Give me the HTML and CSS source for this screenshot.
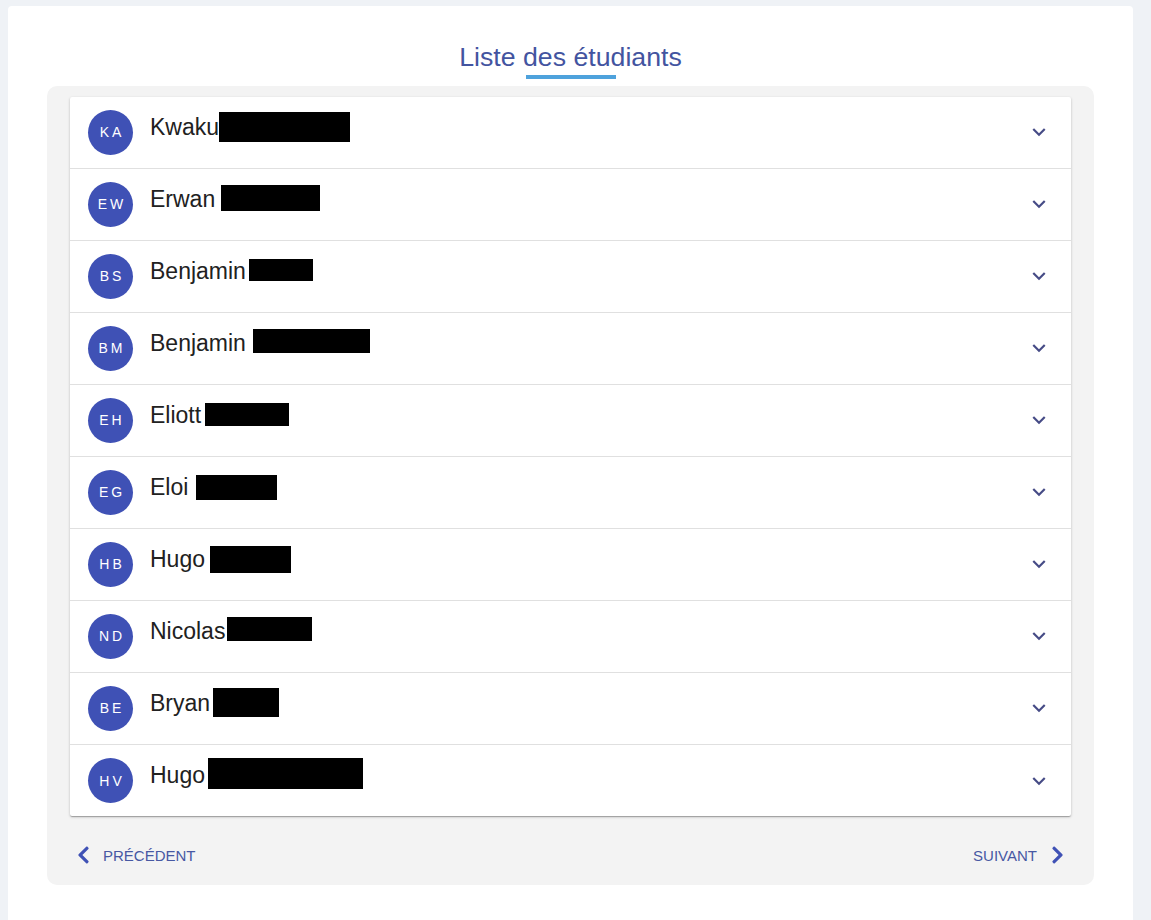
FILE: index.html
```html
<!DOCTYPE html>
<html lang="fr">
<head>
<meta charset="utf-8">
<title>Liste des étudiants</title>
<link rel="stylesheet" href="styles.css">
</head>
<body>
<main class="card">
  <h1 class="title">Liste des étudiants</h1>
  <div class="title-bar"></div>
  <section class="panel">
    <ul class="list">
      <li class="row"><span class="avatar">KA</span><div class="name"><span>Kwaku</span><span class="redact" style="margin-left:0;margin-top:0;width:131px;height:30px"></span></div><svg class="expand" viewBox="0 0 24 24"><path d="M16.59 8.59L12 13.17 7.41 8.59 6 10l6 6 6-6z"/></svg></li>
      <li class="row"><span class="avatar">EW</span><div class="name"><span>Erwan</span><span class="redact" style="margin-left:6px;margin-top:1px;width:99px;height:26px"></span></div><svg class="expand" viewBox="0 0 24 24"><path d="M16.59 8.59L12 13.17 7.41 8.59 6 10l6 6 6-6z"/></svg></li>
      <li class="row"><span class="avatar">BS</span><div class="name"><span>Benjamin</span><span class="redact" style="margin-left:3px;margin-top:3px;width:64px;height:22px"></span></div><svg class="expand" viewBox="0 0 24 24"><path d="M16.59 8.59L12 13.17 7.41 8.59 6 10l6 6 6-6z"/></svg></li>
      <li class="row"><span class="avatar">BM</span><div class="name"><span>Benjamin</span><span class="redact" style="margin-left:7px;margin-top:1px;width:117px;height:24px"></span></div><svg class="expand" viewBox="0 0 24 24"><path d="M16.59 8.59L12 13.17 7.41 8.59 6 10l6 6 6-6z"/></svg></li>
      <li class="row"><span class="avatar">EH</span><div class="name"><span>Eliott</span><span class="redact" style="margin-left:4px;margin-top:3px;width:84px;height:23px"></span></div><svg class="expand" viewBox="0 0 24 24"><path d="M16.59 8.59L12 13.17 7.41 8.59 6 10l6 6 6-6z"/></svg></li>
      <li class="row"><span class="avatar">EG</span><div class="name"><span>Eloi</span><span class="redact" style="margin-left:8px;margin-top:3px;width:81px;height:25px"></span></div><svg class="expand" viewBox="0 0 24 24"><path d="M16.59 8.59L12 13.17 7.41 8.59 6 10l6 6 6-6z"/></svg></li>
      <li class="row"><span class="avatar">HB</span><div class="name"><span>Hugo</span><span class="redact" style="margin-left:5px;margin-top:2px;width:81px;height:27px"></span></div><svg class="expand" viewBox="0 0 24 24"><path d="M16.59 8.59L12 13.17 7.41 8.59 6 10l6 6 6-6z"/></svg></li>
      <li class="row"><span class="avatar">ND</span><div class="name"><span>Nicolas</span><span class="redact" style="margin-left:2px;margin-top:1px;width:85px;height:24px"></span></div><svg class="expand" viewBox="0 0 24 24"><path d="M16.59 8.59L12 13.17 7.41 8.59 6 10l6 6 6-6z"/></svg></li>
      <li class="row"><span class="avatar">BE</span><div class="name"><span>Bryan</span><span class="redact" style="margin-left:3px;margin-top:0;width:66px;height:29px"></span></div><svg class="expand" viewBox="0 0 24 24"><path d="M16.59 8.59L12 13.17 7.41 8.59 6 10l6 6 6-6z"/></svg></li>
      <li class="row"><span class="avatar">HV</span><div class="name"><span>Hugo</span><span class="redact" style="margin-left:3px;margin-top:-2px;width:155px;height:31px"></span></div><svg class="expand" viewBox="0 0 24 24"><path d="M16.59 8.59L12 13.17 7.41 8.59 6 10l6 6 6-6z"/></svg></li>
    </ul>
    <nav class="pager">
      <button class="pager-btn prev" type="button">
        <svg class="chev" viewBox="0 0 320 512"><path d="M34.52 239.03L228.87 44.69c9.37-9.370 24.57-9.37 33.94 0l22.67 22.67c9.36 9.36 9.37 24.52.04 33.9L131.49 256l154.02 154.75c9.34 9.38 9.32 24.54-.04 33.9l-22.67 22.67c-9.37 9.37-24.57 9.37-33.94 0L34.52 272.97c-9.37-9.37-9.37-24.57 0-33.94z"/></svg>
        <span>PRÉCÉDENT</span>
      </button>
      <button class="pager-btn next" type="button">
        <span>SUIVANT</span>
        <svg class="chev" viewBox="0 0 320 512"><path d="M285.476 272.971L91.132 467.314c-9.373 9.373-24.569 9.373-33.941 0l-22.667-22.667c-9.357-9.357-9.375-24.522-.04-33.901L188.505 256 34.484 101.255c-9.335-9.379-9.317-24.544.04-33.901l22.667-22.667c9.373-9.373 24.569-9.373 33.941 0L285.475 239.03c9.373 9.372 9.373 24.568.001 33.941z"/></svg>
      </button>
    </nav>
  </section>
</main>
</body>
</html>
```
FILE: styles.css
```css
* { box-sizing: border-box; }
html, body { height: 100%; }
body {
  margin: 0;
  padding: 6px 18px 0 8px;
  background: #eff2f6;
  font-family: "Liberation Sans", Arial, sans-serif;
  overflow: hidden;
}
.card {
  background: #fff;
  border-radius: 4px 4px 0 0;
  min-height: 100%;
  padding: 35px 39px 40px;
  display: flex;
  flex-direction: column;
  align-items: center;
}
.title {
  margin: 0;
  font-weight: 400;
  font-size: 26.7px;
  line-height: 32px;
  color: #4354a0;
}
.title-bar {
  width: 90px;
  height: 4px;
  margin-top: 2px;
  background: #4ea2dc;
}
.panel {
  align-self: stretch;
  margin-top: 7px;
  background: #f3f3f3;
  border-radius: 10px;
  padding: 11px 23px 12px;
}
.list {
  list-style: none;
  margin: 0;
  padding: 0;
  background: #fff;
  border-radius: 2px;
  box-shadow: 0 1px 3px rgba(0,0,0,.2), 0 1px 1px rgba(0,0,0,.14), 0 2px 1px -1px rgba(0,0,0,.12);
}
.row {
  display: flex;
  align-items: center;
  height: 72px;
  padding: 0 19px 1px 18px;
  border-bottom: 1px solid #e0e0e0;
}
.row:last-child { border-bottom: none; height: 71px; padding-bottom: 0; }
.avatar {
  flex: none;
  width: 45px;
  height: 45px;
  border-radius: 50%;
  background: #3f51b5;
  color: #fff;
  font-size: 14px;
  letter-spacing: 3px;
  text-indent: 3px;
  display: flex;
  align-items: center;
  justify-content: center;
}
.name {
  flex: 1;
  align-self: flex-start;
  margin-top: 15px;
  margin-left: 17px;
  display: flex;
  align-items: flex-start;
  font-size: 23px;
  line-height: 30px;
  color: #212121;
}
.redact {
  display: block;
  background: #000;
}
.expand {
  flex: none;
  width: 26px;
  height: 26px;
  fill: #464b86;
}
.pager {
  display: flex;
  justify-content: space-between;
  margin-top: 21px;
}
.pager-btn {
  display: flex;
  align-items: center;
  gap: 13px;
  height: 36px;
  border: none;
  background: transparent;
  font-family: inherit;
  font-size: 15px;
  color: #4758a3;
  cursor: pointer;
}
.prev { padding: 0 0 0 7px; }
.next { padding: 0 7px 0 0; gap: 14px; }
.chev {
  width: 13px;
  height: 20px;
  fill: #3f51b5;
}
```
